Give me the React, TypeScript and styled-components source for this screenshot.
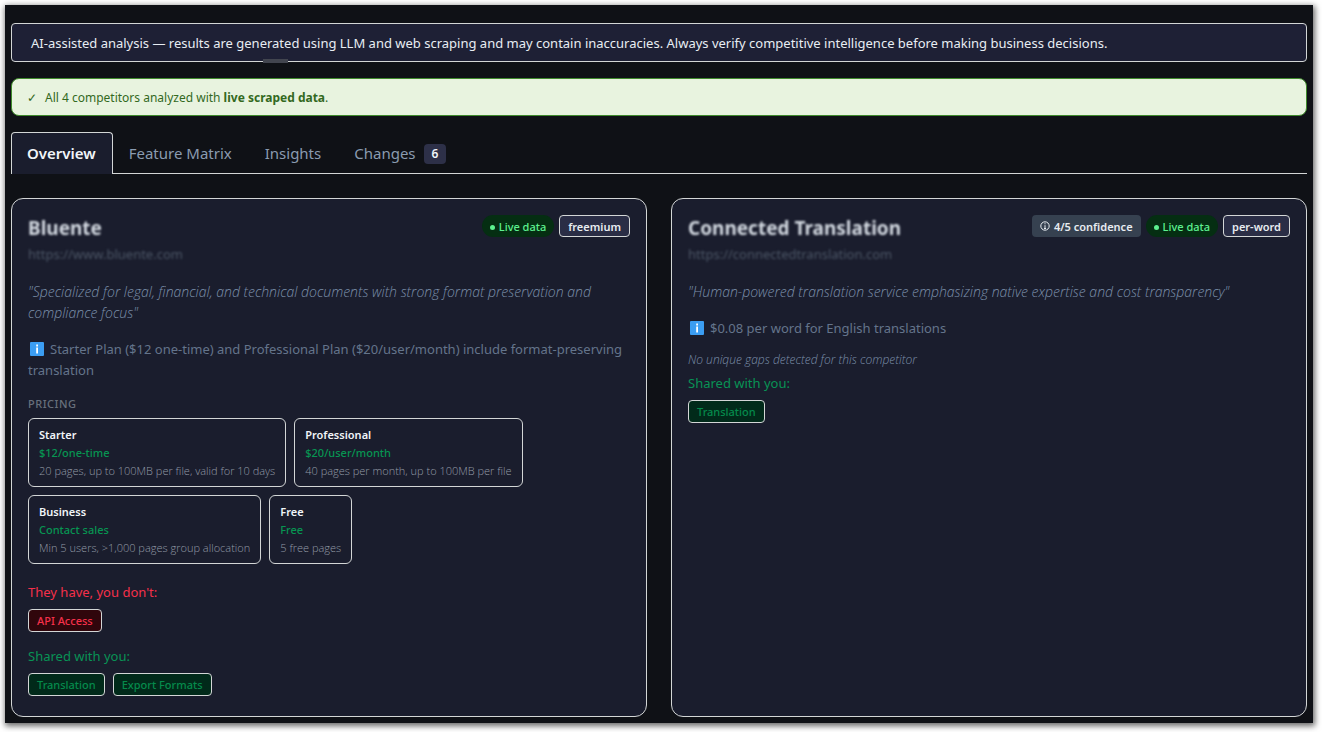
import React from "react";
import styled, { createGlobalStyle } from "styled-components";

const Global = createGlobalStyle`
  *, *::before, *::after { box-sizing: border-box; }
  body {
    margin: 0;
    background: #fff;
    font-family: "Noto Sans", "Open Sans", sans-serif;
    font-size: 13px;
    line-height: 21px;
  }
  h2, h3, p { margin: 0; }
  button { font: inherit; }
`;

const Page = styled.main`
  margin: 5px 9px 9px 5px;
  padding: 18px 6px 6px;
  background: #0f1116;
  box-shadow: 1px 2px 6px 1px rgba(0, 0, 0, 0.6);
  color: #e2e8f0;
`;

const Disclaimer = styled.div`
  position: relative;
  padding: 9px 19px 7px;
  border: 1px solid #d3d6d6;
  border-radius: 4px;
  background: #1e2035;
  color: #e8edf3;
`;

const Handle = styled.span`
  position: absolute;
  left: 251px;
  bottom: -2px;
  width: 25px;
  height: 4px;
  background: #42454f;
`;

const Success = styled.div`
  display: flex;
  align-items: center;
  gap: 8px;
  margin-top: 16px;
  padding: 9px 15px 7px;
  border: 1px solid #3f8a2c;
  border-radius: 8px;
  background: #e8f3df;
  color: #33691e;
  font-size: 12px;
  line-height: 20px;
`;

const Tabs = styled.div`
  display: flex;
  margin-top: 16px;
  border-bottom: 1px solid #d3d6d6;
`;

const Tab = styled.button<{ $active?: boolean }>`
  display: flex;
  align-items: center;
  gap: 8px;
  height: 42px;
  margin-bottom: -1px;
  padding: 0 16px 0 15px;
  border: 1px solid ${(p) => (p.$active ? "#d3d6d6" : "transparent")};
  border-bottom: 0;
  border-radius: 4px 4px 0 0;
  background: ${(p) => (p.$active ? "#1a1d2d" : "transparent")};
  color: ${(p) => (p.$active ? "#f1f5f9" : "#8a9bb0")};
  font-size: 15px;
  font-weight: ${(p) => (p.$active ? 600 : 400)};
`;

const Count = styled.span`
  padding: 0 8px;
  border-radius: 4px;
  background: #2d3048;
  color: #f1f5f9;
  font-size: 12px;
  line-height: 20px;
  font-weight: 600;
`;

const Grid = styled.div`
  display: grid;
  grid-template-columns: 1fr 1fr;
  gap: 24px;
  margin-top: 24px;
`;

const Card = styled.article`
  padding: 16px 16px 20px;
  border: 1px solid #d3d6d6;
  border-radius: 12px;
  background: #1a1d2d;
`;

const CardHead = styled.header`
  display: flex;
  justify-content: space-between;
  align-items: flex-start;
`;

const Name = styled.h2`
  font-size: 19px;
  line-height: 26px;
  font-weight: 700;
  color: #d5dbe3;
  filter: blur(1px);
`;

const Site = styled.a`
  display: block;
  margin-top: 4px;
  color: #4c5666;
  font-size: 13px;
  line-height: 18px;
  text-decoration: none;
  filter: blur(1px);
`;

const Badges = styled.div`
  display: flex;
  gap: 5px;
`;

const Badge = styled.span<{ $kind: "confidence" | "live" | "model" }>`
  display: flex;
  align-items: center;
  gap: 4px;
  height: 22px;
  padding: 0 8px;
  border-radius: ${(p) => (p.$kind === "live" ? "11px" : "4px")};
  border: ${(p) => (p.$kind === "model" ? "1px solid #d3d6d6" : "0")};
  background: ${(p) =>
    p.$kind === "live" ? "#052e12" : p.$kind === "model" ? "#2a2d45" : "#364150"};
  color: ${(p) => (p.$kind === "live" ? "#5df08f" : "#e8ecf1")};
  font-size: 11px;
  font-weight: ${(p) => (p.$kind === "live" ? 500 : 600)};
`;

const Dot = styled.span`
  width: 5px;
  height: 5px;
  margin-top: 2px;
  border-radius: 50%;
  background: currentColor;
`;

const Quote = styled.p`
  margin-top: 18px;
  color: #7c90ab;
  font-family: "Open Sans", "Noto Sans", sans-serif;
  font-size: 14px;
  font-weight: 300;
  font-style: italic;
`;

const Note = styled.p`
  margin-top: 16px;
  color: #64748b;
  svg { margin: 0 6px 0 2px; vertical-align: -2px; }
`;

const PricingTitle = styled.h3`
  margin-top: 14px;
  color: #68707c;
  font-size: 11px;
  line-height: 18px;
  font-weight: 500;
  letter-spacing: 0.5px;
`;

const Plans = styled.div`
  display: flex;
  flex-wrap: wrap;
  gap: 8px;
  margin-top: 5px;
`;

const Plan = styled.div`
  padding: 7px 10px 6px;
  border: 1px solid #d3d6d6;
  border-radius: 6px;
  line-height: 18px;
`;

const PlanName = styled.div`
  font-size: 11px;
  font-weight: 600;
  color: #f1f5f9;
`;

const PlanPrice = styled.div`
  font-size: 11px;
  font-weight: 500;
  color: #079552;
`;

const PlanNote = styled.div`
  font-family: "Open Sans", "Noto Sans", sans-serif;
  font-size: 11px;
  font-weight: 300;
  color: #939ba6;
`;

const Label = styled.p<{ $tone: "gap" | "shared"; $space: number }>`
  margin-top: ${(p) => p.$space}px;
  color: ${(p) => (p.$tone === "gap" ? "#f5304a" : "#089355")};
`;

const Tags = styled.div`
  display: flex;
  gap: 8px;
  margin-top: 6px;
`;

const Tag = styled.span<{ $tone: "gap" | "shared" }>`
  padding: 0 8px;
  border: 1px solid #d3d6d6;
  border-radius: 4px;
  background: ${(p) => (p.$tone === "gap" ? "#30060c" : "#012a1a")};
  color: ${(p) => (p.$tone === "gap" ? "#f5304a" : "#058a4c")};
  font-size: 11px;
  line-height: 21px;
  font-weight: 500;
`;

const NoGaps = styled.p`
  margin-top: 12px;
  color: #7c90ab;
  font-family: "Open Sans", "Noto Sans", sans-serif;
  font-size: 12px;
  font-weight: 300;
  line-height: 18px;
  font-style: italic;
`;

const InfoIcon = () => (
  <svg width="14" height="14" viewBox="0 0 14 14" aria-hidden="true">
    <rect width="14" height="14" rx="1" fill="#3b9df2" />
    <path d="M6.2 2.6h1.8v1.8H6.2zM6.2 5.6h1.8v5.8H6.2z" fill="#fff" />
  </svg>
);

const ConfidenceIcon = () => (
  <svg width="10" height="10" viewBox="0 0 10 10" fill="none" stroke="currentColor" aria-hidden="true">
    <circle cx="5" cy="5" r="4.2" />
    <path d="M5 2.2v1.1M5 4.2v3.6M4 7.5h2" />
  </svg>
);

const LiveBadge = () => (
  <Badge $kind="live">
    <Dot />
    Live data
  </Badge>
);

const plans = [
  ["Starter", "$12/one-time", "20 pages, up to 100MB per file, valid for 10 days"],
  ["Professional", "$20/user/month", "40 pages per month, up to 100MB per file"],
  ["Business", "Contact sales", "Min 5 users, >1,000 pages group allocation"],
  ["Free", "Free", "5 free pages"],
];

export default function App() {
  return (
    <>
      <Global />
      <Page>
        <Disclaimer>
          AI-assisted analysis — results are generated using LLM and web scraping and may contain
          inaccuracies. Always verify competitive intelligence before making business decisions.
          <Handle />
        </Disclaimer>
        <Success>
          <span>✓</span>
          <span>
            All 4 competitors analyzed with <strong>live scraped data</strong>.
          </span>
        </Success>
        <Tabs role="tablist">
          <Tab role="tab" aria-selected="true" $active>Overview</Tab>
          <Tab role="tab" aria-selected="false">Feature Matrix</Tab>
          <Tab role="tab" aria-selected="false">Insights</Tab>
          <Tab role="tab" aria-selected="false">
            Changes <Count>6</Count>
          </Tab>
        </Tabs>
        <Grid>
          <Card>
            <CardHead>
              <div>
                <Name>Bluente</Name>
                <Site href="#bluente">https://www.bluente.com</Site>
              </div>
              <Badges>
                <LiveBadge />
                <Badge $kind="model">freemium</Badge>
              </Badges>
            </CardHead>
            <Quote>
              "Specialized for legal, financial, and technical documents with strong format
              preservation and compliance focus"
            </Quote>
            <Note>
              <InfoIcon />
              Starter Plan ($12 one-time) and Professional Plan ($20/user/month) include
              format-preserving translation
            </Note>
            <PricingTitle>PRICING</PricingTitle>
            <Plans>
              {plans.map(([name, price, note]) => (
                <Plan key={name}>
                  <PlanName>{name}</PlanName>
                  <PlanPrice>{price}</PlanPrice>
                  <PlanNote>{note}</PlanNote>
                </Plan>
              ))}
            </Plans>
            <Label $tone="gap" $space={18}>They have, you don't:</Label>
            <Tags>
              <Tag $tone="gap">API Access</Tag>
            </Tags>
            <Label $tone="shared" $space={14}>Shared with you:</Label>
            <Tags>
              <Tag $tone="shared">Translation</Tag>
              <Tag $tone="shared">Export Formats</Tag>
            </Tags>
          </Card>
          <Card>
            <CardHead>
              <div>
                <Name>Connected Translation</Name>
                <Site href="#connected">https://connectedtranslation.com</Site>
              </div>
              <Badges>
                <Badge $kind="confidence">
                  <ConfidenceIcon />
                  4/5 confidence
                </Badge>
                <LiveBadge />
                <Badge $kind="model">per-word</Badge>
              </Badges>
            </CardHead>
            <Quote>
              "Human-powered translation service emphasizing native expertise and cost transparency"
            </Quote>
            <Note>
              <InfoIcon />
              $0.08 per word for English translations
            </Note>
            <NoGaps>No unique gaps detected for this competitor</NoGaps>
            <Label $tone="shared" $space={4}>Shared with you:</Label>
            <Tags>
              <Tag $tone="shared">Translation</Tag>
            </Tags>
          </Card>
        </Grid>
      </Page>
    </>
  );
}
